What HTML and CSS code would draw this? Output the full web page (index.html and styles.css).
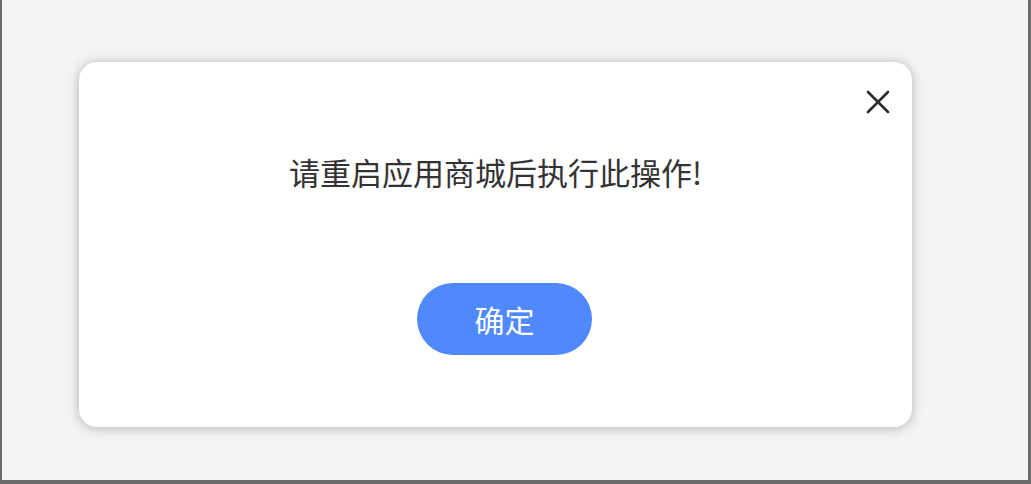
FILE: index.html
```html
<!DOCTYPE html>
<html lang="zh-CN">
<head>
<meta charset="utf-8">
<title>提示</title>
<link rel="stylesheet" href="styles.css">
</head>
<body>
<div class="dialog">
  <button class="close" aria-label="关闭">
    <svg width="24" height="24" viewBox="0 0 24 24"><path d="M2 2 L22 22 M22 2 L2 22" stroke="#2b2b2b" stroke-width="2.6" stroke-linecap="round" fill="none"/></svg>
  </button>
  <p class="message">请重启应用商城后执行此操作!</p>
  <button class="confirm">确定</button>
</div>
</body>
</html>
```
FILE: styles.css
```css
html, body {
  margin: 0;
  padding: 0;
}
body {
  box-sizing: border-box;
  width: 1031px;
  height: 484px;
  background: #f4f4f4;
  border-left: 2px solid #6a6a6a;
  border-right: 3px solid #6a6a6a;
  border-bottom: 4px solid #6a6a6a;
  padding: 62px 0 0 77px;
  font-family: "Noto Sans CJK SC", "Noto Sans", sans-serif;
  overflow: hidden;
}
.dialog {
  position: relative;
  box-sizing: border-box;
  width: 833px;
  height: 365px;
  background: #fff;
  border-radius: 18px;
  box-shadow: 0 1px 12px rgba(0, 0, 0, 0.28);
  display: flex;
  flex-direction: column;
  align-items: center;
}
.close {
  position: absolute;
  top: 28px;
  right: 22px;
  width: 24px;
  height: 24px;
  padding: 0;
  border: 0;
  background: none;
  cursor: pointer;
}
.close svg {
  display: block;
}
.message {
  margin: 89px 0 0;
  font-size: 31px;
  line-height: 42px;
  color: #333;
}
.confirm {
  margin: 90px 0 0 18px;
  width: 175px;
  height: 72px;
  border: 0;
  border-radius: 36px;
  background: #5088fe;
  color: #fff;
  font-family: inherit;
  font-size: 30px;
  cursor: pointer;
}
```
